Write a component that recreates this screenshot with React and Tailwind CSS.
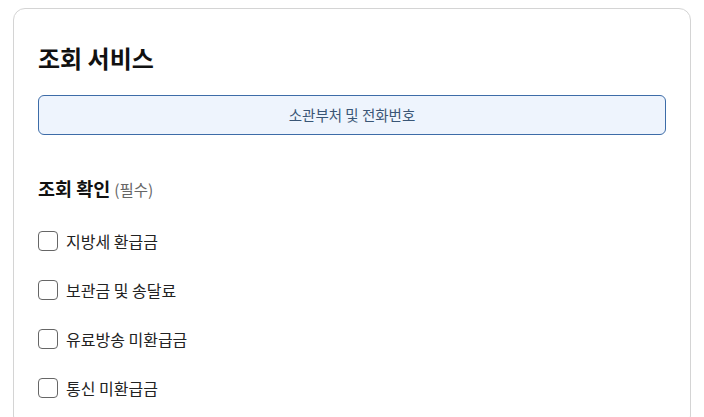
import { useState } from 'react';

const items = ['지방세 환급금', '보관금 및 송달료', '유료방송 미환급금', '통신 미환급금'];

export default function App() {
    const [checked, setChecked] = useState({});

    return (
        <div className="min-h-screen bg-white font-['Noto_Sans_CJK_KR','Noto_Sans',sans-serif] pt-2">
            <div className="ml-[13px] w-[678px] min-h-[420px] border border-[#d4d4d4] rounded-xl px-6 pt-[34px]">
                <h2 className="text-[24px] leading-[30px] font-bold text-[#111]">조회 서비스</h2>

                <button className="mt-[22px] w-full h-10 rounded-md border border-[#3d6ca8] bg-[#eef4fd] text-[14.5px] text-[#3a5676]">
                    소관부처 및 전화번호
                </button>

                <div className="mt-[41px] leading-6 flex items-baseline gap-1">
                    <span className="text-[18.5px] font-bold text-[#111]">조회 확인</span>
                    <span className="text-[15.5px] text-[#666]">(필수)</span>
                </div>

                <div className="mt-[28px] flex flex-col gap-[25px]">
                    {items.map((label, idx) => (
                        <label key={idx} className="flex items-center gap-2 h-6 cursor-pointer">
                            <input
                                type="checkbox"
                                className="sr-only"
                                checked={!!checked[idx]}
                                onChange={() => setChecked({ ...checked, [idx]: !checked[idx] })}
                            />
                            <span className={`w-5 h-5 rounded-[4px] border border-[#666] ${checked[idx] ? 'bg-[#3d6ca8]' : 'bg-white'}`}></span>
                            <span className="text-[16px] text-[#222]">{label}</span>
                        </label>
                    ))}
                </div>
            </div>
        </div>
    );
}
